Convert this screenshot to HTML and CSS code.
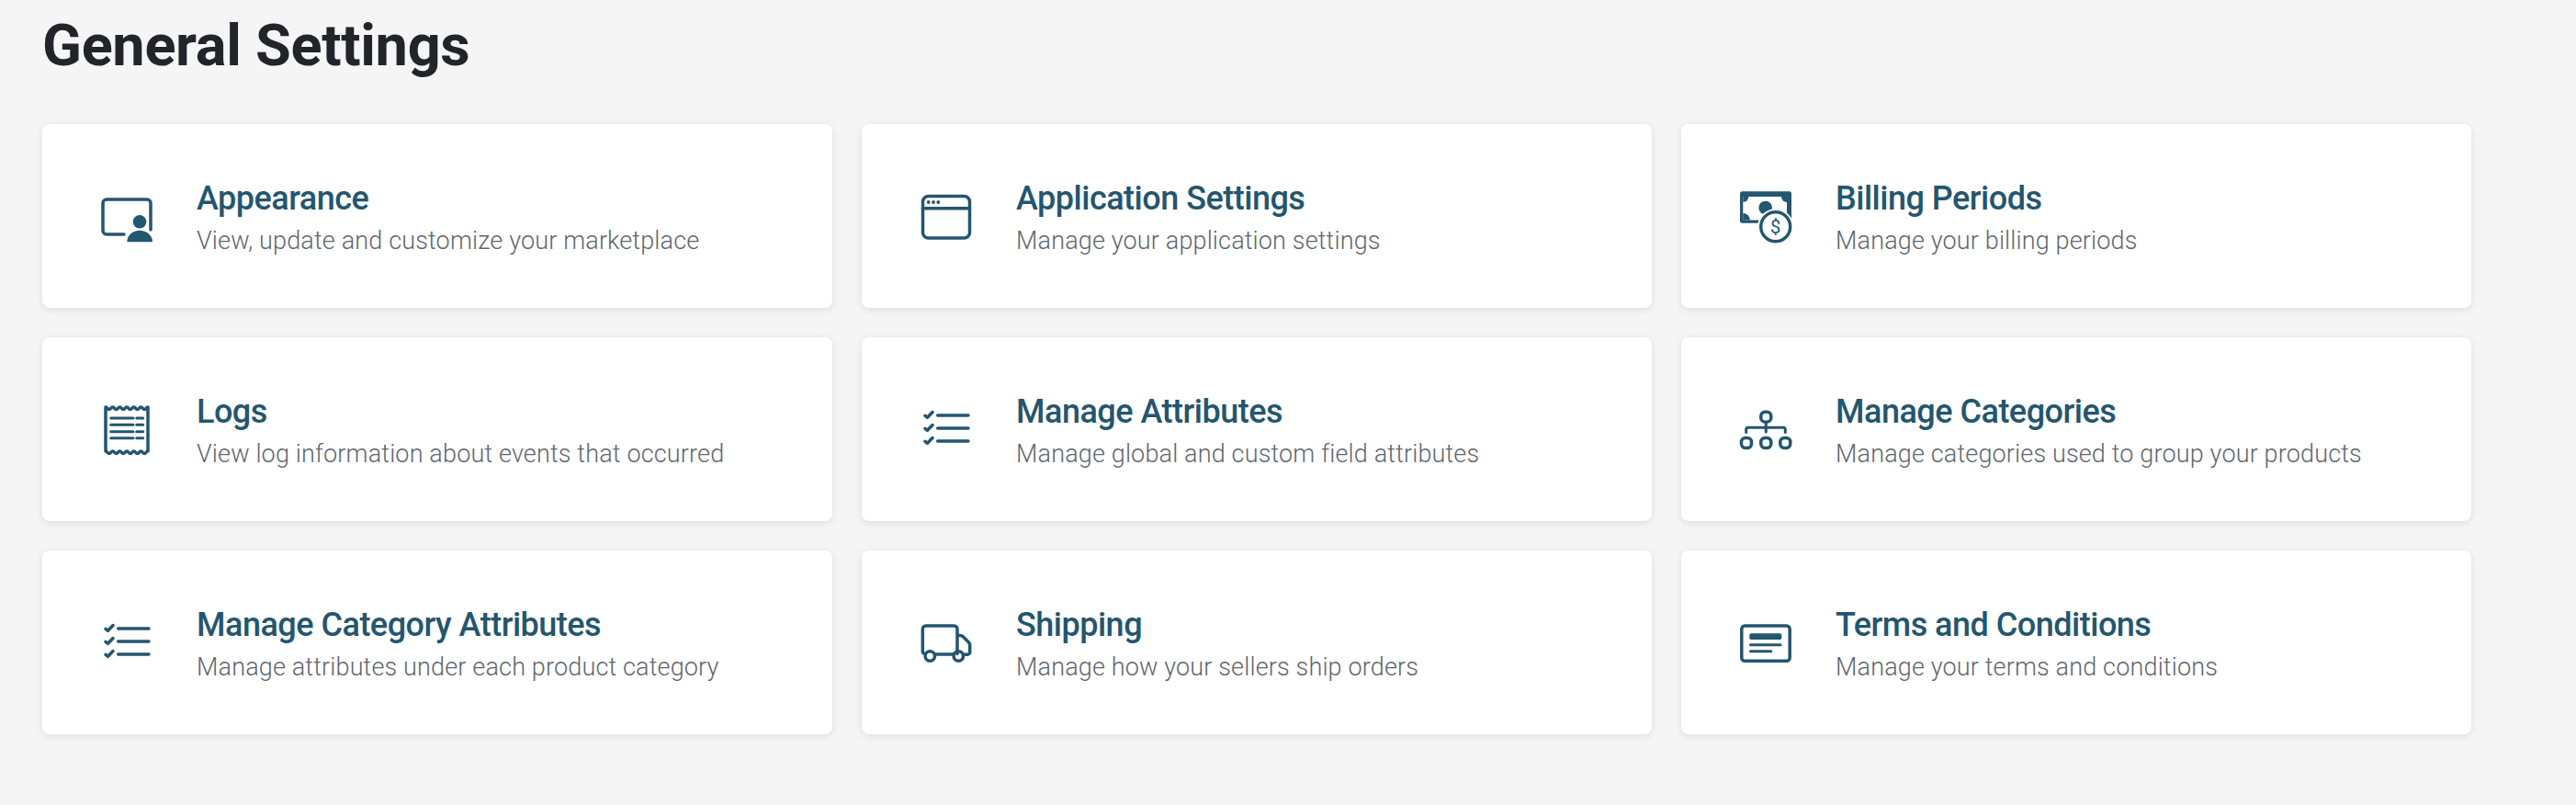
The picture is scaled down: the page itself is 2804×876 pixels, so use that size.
FILE: index.html
```html
<!DOCTYPE html>
<html lang="en">
<head>
<meta charset="utf-8">
<title>General Settings</title>
<link rel="stylesheet" href="styles.css">
</head>
<body>
<main class="page">
  <h1 class="heading">General Settings</h1>
  <div class="grid">
    <a class="card">
      <svg class="icon" viewBox="0 0 64 64"><path class="s" d="M29 52H10a4 4 0 0 1-4-4V18a4 4 0 0 1 4-4h44a4 4 0 0 1 4 4v29"/><circle class="f" cx="46" cy="38.300" r="7.300"/><path class="f" d="M32.300 60.300c0-7 6-12.600 13.700-12.600S60 53.300 60 60.300z"/></svg>
      <div class="body"><div class="title">Appearance</div><div class="desc">View, update and customize your marketplace</div></div>
    </a>
    <a class="card">
      <svg class="icon" viewBox="0 0 64 64"><rect class="s" x="6.500" y="10.500" width="51" height="45.500" rx="6"/><path class="s" d="M6.500 23.700h51"/><circle class="f" cx="12.700" cy="17" r="1.900"/><circle class="f" cx="18" cy="17" r="1.900"/><circle class="f" cx="23.300" cy="17" r="1.900"/></svg>
      <div class="body"><div class="title">Application Settings</div><div class="desc">Manage your application settings</div></div>
    </a>
    <a class="card">
      <svg class="icon" viewBox="0 0 64 64"><rect class="f" x="4" y="5.300" width="56" height="34.400" rx="2.500"/><rect class="w" x="7.300" y="11" width="47.700" height="25.500"/><path class="f" d="M7.300 11h6a6 6 0 0 1-6 6z"/><path class="f" d="M55 11h-6a6 6 0 0 0 6 6z"/><path class="f" d="M7.300 29a7.500 7.500 0 0 1 7.500 7.500H7.300z"/><circle class="f" cx="31.700" cy="23" r="7.300"/><circle class="w" cx="42.700" cy="43.700" r="19.500"/><circle class="h" cx="42.700" cy="43.700" r="16"/><text class="dollar" x="42.700" y="50.800">$</text></svg>
      <div class="body"><div class="title">Billing Periods</div><div class="desc">Manage your billing periods</div></div>
    </a>
    <a class="card">
      <svg class="icon" viewBox="0 0 64 64"><path class="s" d="M9 8c2 0 1.800 2.500 3.800 2.500S14.700 8 16.700 8s1.800 2.500 3.800 2.500S22.400 8 24.400 8s1.800 2.500 3.800 2.500S30 8 32 8s1.800 2.500 3.800 2.500S37.700 8 39.700 8s1.800 2.500 3.800 2.500S45.400 8 47.400 8s1.800 2.500 3.800 2.500S53 8 55 8v48c-2 0-1.800 2.500-3.800 2.500S49.400 56 47.400 56s-1.800 2.500-3.800 2.500S41.700 56 39.700 56s-1.800 2.500-3.800 2.500S34 56 32 56s-1.800 2.500-3.800 2.500S26.400 56 24.400 56s-1.800 2.500-3.800 2.500S18.700 56 16.700 56s-1.800 2.500-3.800 2.500S11 56 9 56z"/><path class="t" d="M14.700 20H39M14.700 27.300H39M14.700 34.700H39M14.700 41.700H39M42.700 20h7M42.700 27.300h7M42.700 34.700h7M42.700 41.700h7"/></svg>
      <div class="body"><div class="title">Logs</div><div class="desc">View log information about events that occurred</div></div>
    </a>
    <a class="card">
      <svg class="icon" viewBox="0 0 64 64"><path class="s" d="M22.700 17H56M22.700 31H56M22.700 45H56M9 17.300l2.500 2 5.500-5.800M9 31.300l2.500 2 5.500-5.800M9 45.300l2.500 2 5.500-5.800"/></svg>
      <div class="body"><div class="title">Manage Attributes</div><div class="desc">Manage global and custom field attributes</div></div>
    </a>
    <a class="card">
      <svg class="icon" viewBox="0 0 64 64"><rect class="s" x="26.800" y="13.200" width="11" height="11" rx="4.500"/><rect class="s" x="5.500" y="41.500" width="11" height="11" rx="4.500"/><rect class="s" x="26.800" y="41.500" width="11" height="11" rx="4.500"/><rect class="s" x="47.800" y="41.500" width="11" height="11" rx="4.500"/><path class="t" d="M32.300 25v10M10.700 35.500v-3.500a1.700 1.700 0 0 1 1.700-1.700h39.200a1.700 1.700 0 0 1 1.700 1.700v3.500"/></svg>
      <div class="body"><div class="title">Manage Categories</div><div class="desc">Manage categories used to group your products</div></div>
    </a>
    <a class="card">
      <svg class="icon" viewBox="0 0 64 64"><path class="s" d="M22.700 17H56M22.700 31H56M22.700 45H56M9 17.300l2.500 2 5.500-5.800M9 31.300l2.500 2 5.500-5.800M9 45.300l2.500 2 5.500-5.800"/></svg>
      <div class="body"><div class="title">Manage Category Attributes</div><div class="desc">Manage attributes under each product category</div></div>
    </a>
    <a class="card">
      <svg class="icon" viewBox="0 0 64 64"><path class="s" d="M8.500 44.500c-1.500-.3-2.200-1.200-2.200-2.700V17.500a3.500 3.500 0 0 1 3.500-3.500h30.700a3.500 3.500 0 0 1 3.500 3.500v27M20 45h20M44 24.500h3c1.500 0 2.500.5 3.500 1.500l5.500 5.500c1 1 1.700 2 1.700 3.500v7.500c0 1.500-1 2.800-2.500 2.800H51"/><circle class="s" cx="14.300" cy="47" r="5.200"/><circle class="s" cx="45.300" cy="47" r="5.200"/></svg>
      <div class="body"><div class="title">Shipping</div><div class="desc">Manage how your sellers ship orders</div></div>
    </a>
    <a class="card">
      <svg class="icon" viewBox="0 0 64 64"><rect class="s" x="5.800" y="14" width="52.400" height="38.300" rx="3.500"/><rect class="f" x="14.300" y="22.300" width="35" height="6.700" rx="1.800"/><path class="b" d="M15.500 34.700h32.600M15.500 41.700h22.300"/></svg>
      <div class="body"><div class="title">Terms and Conditions</div><div class="desc">Manage your terms and conditions</div></div>
    </a>
  </div>
</main>
</body>
</html>
```
FILE: styles.css
```css
* {
  box-sizing: border-box;
}

html,
body {
  margin: 0;
  height: 100%;
}

body {
  background: #f5f5f5;
  font-family: Roboto, "Liberation Sans", sans-serif;
}

.page {
  padding: 18px 46px 0;
}

.heading {
  margin: 0 0 53px;
  font-size: 63px;
  line-height: 64px;
  font-weight: 700;
  color: #212529;
  letter-spacing: -0.3px;
}

.grid {
  display: grid;
  grid-template-columns: repeat(3, 860px);
  grid-auto-rows: 200px;
  gap: 32px;
}

.card {
  display: flex;
  align-items: center;
  gap: 44px;
  padding-left: 60px;
  background: #fff;
  border-radius: 8px;
  box-shadow: 0 2px 8px rgba(0, 0, 0, 0.1);
}

.icon {
  width: 64px;
  height: 64px;
  flex: none;
}

.s,
.t,
.b {
  fill: none;
  stroke: #23566f;
  stroke-linecap: round;
  stroke-linejoin: round;
}

.s {
  stroke-width: 3.5;
}

.t,
.b {
  stroke-width: 3;
}

.f {
  fill: #23566f;
}

.w {
  fill: #fff;
}

.h {
  fill: #fff;
  stroke: #23566f;
  stroke-width: 3.5;
}

.dollar {
  fill: #23566f;
  font-family: Roboto, sans-serif;
  font-size: 20px;
  font-weight: 400;
  text-anchor: middle;
}

.body {
  padding-top: 6px;
}

.title {
  font-size: 36px;
  line-height: 44px;
  font-weight: 500;
  color: #23566f;
  letter-spacing: -0.5px;
}

.desc {
  margin-top: 4px;
  font-size: 27px;
  line-height: 40px;
  font-weight: 300;
  color: #5f676f;
  letter-spacing: 0.15px;
}
```
